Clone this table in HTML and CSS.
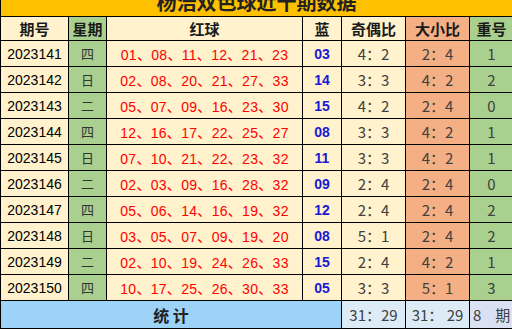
FILE: index.html
```html
<!DOCTYPE html>
<html lang="zh">
<head>
<meta charset="utf-8">
<link rel="stylesheet" href="styles.css">
</head>
<body>
<div class="sheet">
  <div class="title"><span class="title-text">杨浩双色球近十期数据</span></div>
  <div class="grid">
    <div class="c hd cream">期号</div>
    <div class="c hd green">星期</div>
    <div class="c hd cream">红球</div>
    <div class="c hd cream">蓝</div>
    <div class="c hd cream">奇偶比</div>
    <div class="c hd salmon">大小比</div>
    <div class="c hd green">重号</div>

    <div class="c cream num">2023141</div><div class="c green wk">四</div><div class="c cream red">01、08、11、12、21、23</div><div class="c cream blue">03</div><div class="c cream ratio">4：2</div><div class="c salmon ratio">2：4</div><div class="c green ratio">1</div>
    <div class="c cream num">2023142</div><div class="c green wk">日</div><div class="c cream red">02、08、20、21、27、33</div><div class="c cream blue">14</div><div class="c cream ratio">3：3</div><div class="c salmon ratio">4：2</div><div class="c green ratio">2</div>
    <div class="c cream num">2023143</div><div class="c green wk">二</div><div class="c cream red">05、07、09、16、23、30</div><div class="c cream blue">15</div><div class="c cream ratio">4：2</div><div class="c salmon ratio">2：4</div><div class="c green ratio">0</div>
    <div class="c cream num">2023144</div><div class="c green wk">四</div><div class="c cream red">12、16、17、22、25、27</div><div class="c cream blue">08</div><div class="c cream ratio">3：3</div><div class="c salmon ratio">4：2</div><div class="c green ratio">1</div>
    <div class="c cream num">2023145</div><div class="c green wk">日</div><div class="c cream red">07、10、21、22、23、32</div><div class="c cream blue">11</div><div class="c cream ratio">3：3</div><div class="c salmon ratio">4：2</div><div class="c green ratio">1</div>
    <div class="c cream num">2023146</div><div class="c green wk">二</div><div class="c cream red">02、03、09、16、28、32</div><div class="c cream blue">09</div><div class="c cream ratio">2：4</div><div class="c salmon ratio">2：4</div><div class="c green ratio">0</div>
    <div class="c cream num">2023147</div><div class="c green wk">四</div><div class="c cream red">05、06、14、16、19、32</div><div class="c cream blue">12</div><div class="c cream ratio">2：4</div><div class="c salmon ratio">2：4</div><div class="c green ratio">2</div>
    <div class="c cream num">2023148</div><div class="c green wk">日</div><div class="c cream red">03、05、07、09、19、20</div><div class="c cream blue">08</div><div class="c cream ratio">5：1</div><div class="c salmon ratio">2：4</div><div class="c green ratio">2</div>
    <div class="c cream num">2023149</div><div class="c green wk">二</div><div class="c cream red">02、10、19、24、26、33</div><div class="c cream blue">15</div><div class="c cream ratio">2：4</div><div class="c salmon ratio">4：2</div><div class="c green ratio">1</div>
    <div class="c cream num">2023150</div><div class="c green wk">四</div><div class="c cream red">10、17、25、26、30、33</div><div class="c cream blue">05</div><div class="c cream ratio">3：3</div><div class="c salmon ratio">5：1</div><div class="c green ratio">3</div>

    <div class="c st stat-label">统&nbsp;计</div>
    <div class="c st stat ratio">31：29</div>
    <div class="c st stat ratio">31：&nbsp;29</div>
    <div class="c st stat2 ratio left"><span>8</span><span class="qi">期</span></div>
  </div>
</div>
</body>
</html>
```
FILE: styles.css
```css
* { box-sizing: border-box; }
html, body { margin: 0; padding: 0; }
body {
  width: 512px;
  height: 329px;
  overflow: hidden;
  background: #fff;
  font-family: "Liberation Sans", Arial, "Noto Sans CJK SC", sans-serif;
}
.sheet {
  width: 514px;
  border-left: 1px solid #000;
}
.title {
  height: 17px;
  background: #FFC000;
  border-bottom: 1px solid #000;
  overflow: hidden;
  text-align: center;
}
.title-text {
  display: block;
  margin-top: -10px;
  line-height: 24px;
  font-size: 20px;
  font-weight: bold;
  color: #222;
  font-family: "Noto Sans CJK SC", sans-serif;
  padding-right: 2px;
}
.grid {
  display: grid;
  grid-template-columns: 68px 38px 196px 39px 64px 64px 44px;
  grid-template-rows: 24px repeat(10, 26px) 28px;
}
.c {
  border-right: 1px solid #000;
  border-bottom: 1px solid #000;
  display: flex;
  align-items: center;
  justify-content: center;
  font-size: 14px;
  white-space: nowrap;
}
.cream { background: #FFF2CC; }
.green { background: #A9D08E; }
.salmon { background: #F4B084; }
.hd {
  font-family: "Noto Sans CJK SC", sans-serif;
  font-weight: bold;
  font-size: 15px;
  color: #1a1a1a;
}
.num { color: #000; font-size: 14px; }
.wk {
  font-family: "Noto Sans CJK SC", sans-serif;
  font-size: 13px;
  color: #333;
}
.red {
  color: #F00;
  font-size: 14px;
  letter-spacing: 0.3px;
  font-family: "Liberation Sans", "Noto Sans CJK SC", sans-serif;
}
.blue {
  color: #1a1ad6;
  font-weight: bold;
  font-size: 14px;
}
.ratio {
  font-family: "Noto Sans CJK SC", sans-serif;
  font-weight: 400;
  font-size: 15px;
  color: #404040;
}
.stat-label {
  grid-column: 1 / 5;
  background: #9DD3F7;
  font-family: "Noto Sans CJK SC", sans-serif;
  font-weight: bold;
  font-size: 16px;
  color: #222;
}
.stat { background: #DDEBF7; }
.stat2 { background: #D9E1F2; }
.left { justify-content: flex-start; padding-left: 3px; gap: 14px; }
```
